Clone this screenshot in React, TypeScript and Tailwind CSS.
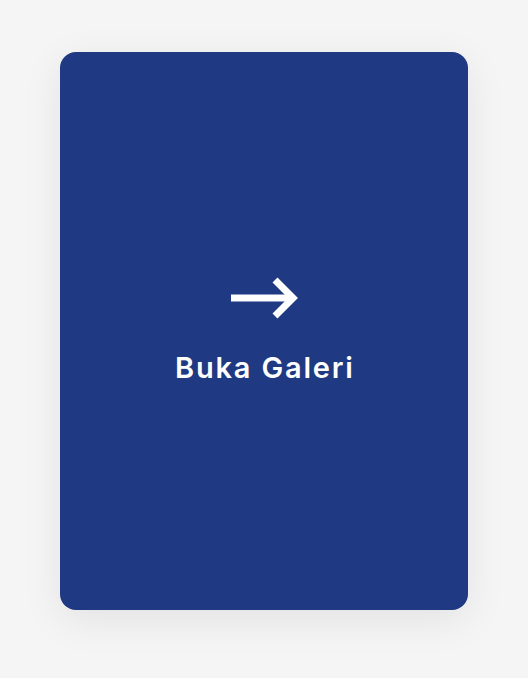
export default function App() {
  return (
    <div className="min-h-[678px] w-full bg-[#f5f5f5] flex justify-center pt-[52px]" style={{ fontFamily: "Inter, 'Noto Sans', sans-serif" }}>
      <div className="w-[408px] h-[558px] rounded-2xl bg-[#1f3983] shadow-[0_10px_40px_rgba(0,0,0,0.08)] flex flex-col items-center justify-center gap-[32px] pb-[6px]">
        <svg width="68" height="46" viewBox="0 0 68 46" fill="none" className="ml-[1px]">
          <path d="M0 23h62" stroke="white" strokeWidth="7" />
          <path d="M44 5l18 18-18 18" stroke="white" strokeWidth="7" />
        </svg>
        <span className="text-white text-[29px] font-semibold leading-none tracking-[1.8px] pl-[1.8px]">Buka Galeri</span>
      </div>
    </div>
  );
}
